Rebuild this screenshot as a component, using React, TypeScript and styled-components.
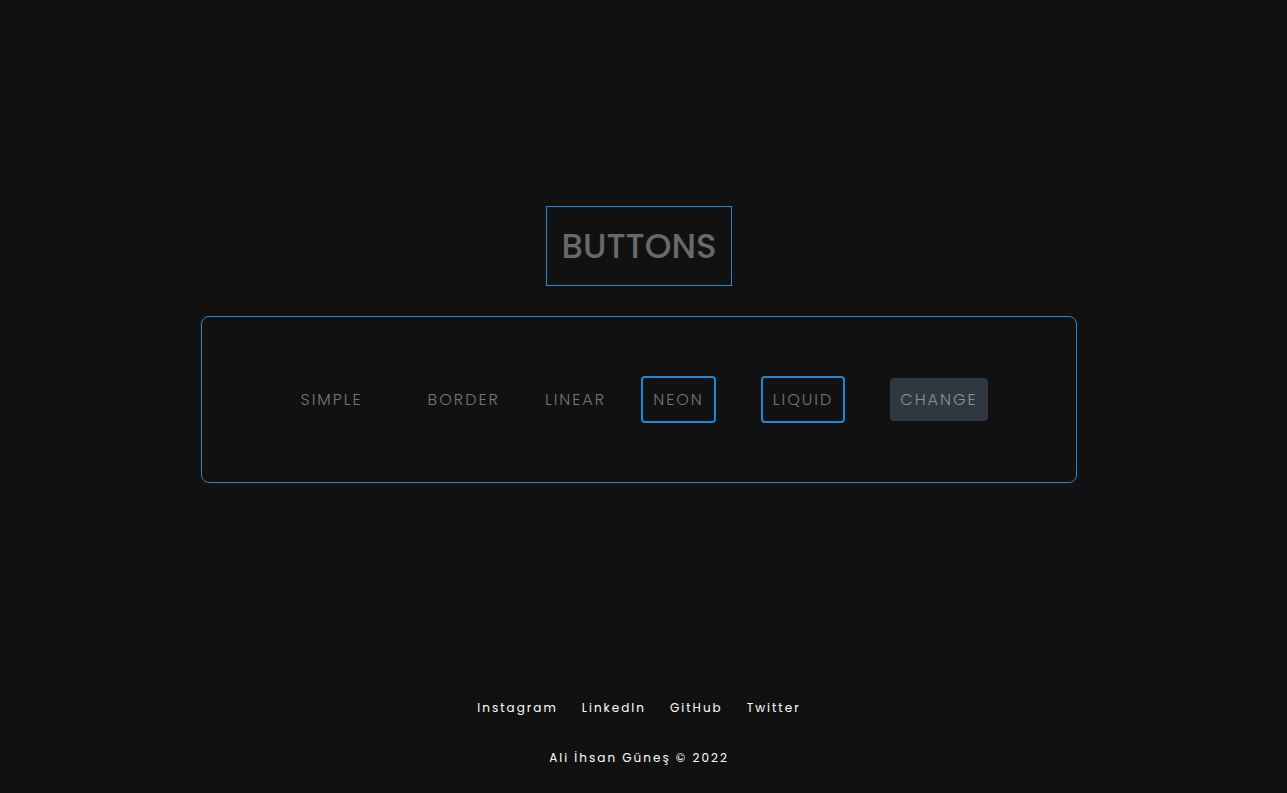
import React from 'react';
import styled, { createGlobalStyle, css } from 'styled-components';

const GlobalStyle = createGlobalStyle`
  * { box-sizing: border-box; margin: 0; padding: 0; }
  body {
    background: #111111;
    font-family: Poppins, Lato, "Open Sans", sans-serif;
  }
`;

const Page = styled.div`
  min-height: 100vh;
  padding: 0 9px 25px 0;
  display: flex;
  flex-direction: column;
  align-items: center;
`;

const Main = styled.main`
  flex: 1;
  width: 100%;
  display: flex;
  flex-direction: column;
  align-items: center;
  justify-content: center;
  gap: 30px;
`;

const Title = styled.h1`
  padding: 15px;
  border: 1px solid #1f87d8;
  color: #696969;
  font-size: 34px;
  font-weight: 500;
  line-height: 48px;
`;

const Panel = styled.section`
  width: 876px;
  max-width: 100%;
  padding: 59px 0;
  border: 1px solid #1f87d8;
  border-radius: 8px;
  display: flex;
  align-items: center;
  justify-content: center;
  gap: 45px;
`;

const DemoButton = styled.button<{ $kind?: 'flush' | 'outline' | 'filled' }>`
  padding: 10px;
  border: 0;
  border-radius: 4px;
  background: transparent;
  color: #767676;
  font: inherit;
  font-size: 16px;
  font-weight: 300;
  line-height: 23px;
  letter-spacing: 2px;
  cursor: pointer;
  ${({ $kind }) => $kind === 'flush' && css`margin: 0 -10px; padding: 10px 0;`}
  ${({ $kind }) => $kind === 'outline' && css`border: 2px solid #1f87d8;`}
  ${({ $kind }) => $kind === 'filled' && css`background: #2f3841; color: #8c9196;`}
`;

const Footer = styled.footer`
  padding-top: 9px;
  display: flex;
  flex-direction: column;
  align-items: center;
  gap: 30px;
  color: #ffffff;
  font-size: 12px;
  line-height: 20px;
  letter-spacing: 2px;
`;

const Links = styled.nav`
  display: flex;
  gap: 24px;
`;

const FooterLink = styled.a`
  color: inherit;
  text-decoration: none;
`;

export default function App() {
  return (
    <Page>
      <GlobalStyle />
      <Main>
        <Title>BUTTONS</Title>
        <Panel>
          <DemoButton>SIMPLE</DemoButton>
          <DemoButton>BORDER</DemoButton>
          <DemoButton $kind="flush">LINEAR</DemoButton>
          <DemoButton $kind="outline">NEON</DemoButton>
          <DemoButton $kind="outline">LIQUID</DemoButton>
          <DemoButton $kind="filled">CHANGE</DemoButton>
        </Panel>
      </Main>
      <Footer>
        <Links>
          <FooterLink href="#instagram">Instagram</FooterLink>
          <FooterLink href="#linkedin">LinkedIn</FooterLink>
          <FooterLink href="#github">GitHub</FooterLink>
          <FooterLink href="#twitter">Twitter</FooterLink>
        </Links>
        <p>Ali İhsan Güneş © 2022</p>
      </Footer>
    </Page>
  );
}
